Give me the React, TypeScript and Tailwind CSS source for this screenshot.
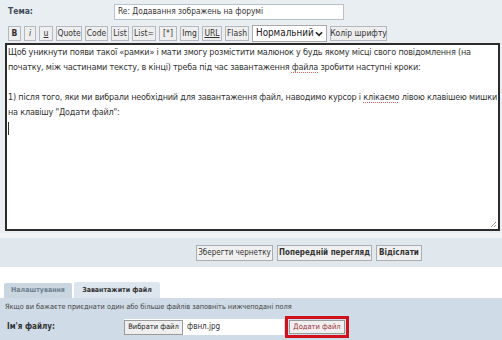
import type { ReactNode } from "react";

const FONT = "font-['DejaVu_Sans_Condensed','DejaVu_Sans',sans-serif]";

function ToolBtn({ children, className = "", w }: { children: ReactNode; className?: string; w: string }) {
  return (
    <span
      className={`flex h-[15px] items-center justify-center whitespace-nowrap border border-[#b4b9bf] bg-[#eeeeee] text-[8.5px] leading-none text-[#333] ${w} ${className}`}
    >
      {children}
    </span>
  );
}

function Misspelled({ children }: { children: ReactNode }) {
  return (
    <span className="underline decoration-[#e06666] decoration-dotted decoration-1 underline-offset-2">
      {children}
    </span>
  );
}

export default function App() {
  return (
    <main className={`h-[340px] w-[502px] overflow-hidden bg-white ${FONT}`}>
      <div className="bg-[#e9eef2] pb-[2px]">
        <div className="flex h-[23px] items-center pl-[8px]">
          <span className="w-[106px] text-[8.5px] font-bold text-[#3f4b5a]">Тема:</span>
          <div className="flex h-[16px] w-[230px] items-center whitespace-nowrap border border-[#b9c1c9] bg-white px-[3px] text-[8.3px] text-[#333]">
            Re: Додавання зображень на форумі
          </div>
        </div>
        <div className="mt-[2px] flex h-[17px] items-center gap-[3px] pl-[8px]">
          <ToolBtn w="w-[13px]" className="font-bold">B</ToolBtn>
          <ToolBtn w="w-[12px]" className="italic">i</ToolBtn>
          <ToolBtn w="w-[14px]" className="underline">u</ToolBtn>
          <ToolBtn w="w-[26px]">Quote</ToolBtn>
          <ToolBtn w="w-[23px]">Code</ToolBtn>
          <ToolBtn w="w-[18px]">List</ToolBtn>
          <ToolBtn w="w-[24px]">List=</ToolBtn>
          <ToolBtn w="w-[18px]">[*]</ToolBtn>
          <ToolBtn w="w-[19px]">Img</ToolBtn>
          <ToolBtn w="w-[20px]" className="underline">URL</ToolBtn>
          <ToolBtn w="w-[24px]">Flash</ToolBtn>
          <span className="flex h-[17px] w-[75px] items-center justify-between whitespace-nowrap border border-[#a9a9a9] bg-white pl-[3px] pr-[3px] text-[9.8px] text-[#222]">
            Нормальний
            <svg width="8" height="6" viewBox="0 0 9 6">
              <path d="M1 1 L4.5 4.5 L8 1" stroke="#222" strokeWidth="1.8" fill="none" />
            </svg>
          </span>
          <ToolBtn w="w-[57px]">Колір шрифту</ToolBtn>
        </div>
        <div className="relative ml-[5px] mt-[1px] h-[188px] w-[495px] whitespace-nowrap border-2 border-[#2b2b2b] bg-white px-[1px] text-[9px] leading-[15px] tracking-[-0.2px] text-[#333]">
          <p>
            Щоб уникнути появи такої «рамки» і мати змогу розмістити малюнок у будь якому місці свого повідомлення (на
            <br />
            початку, між частинами тексту, в кінці) треба під час завантаження <Misspelled>файла</Misspelled> зробити наступні кроки:
          </p>
          <p className="mt-[15px]">
            1) після того, яки ми вибрали необхідний для завантаження файл, наводимо курсор і <Misspelled>клікаємо</Misspelled> лівою клавішею мишки
            <br />
            на клавішу "Додати файл":
          </p>
          <div className="mt-[2px] h-[13px] w-px bg-[#333]" />
          <svg className="absolute bottom-[1px] right-[1px]" width="7" height="7" viewBox="0 0 7 7">
            <path d="M6 1 L1 6 M6 4 L4 6" stroke="#999" strokeWidth="1" />
          </svg>
        </div>
      </div>
      <div className="h-[5px] bg-[#f1f4f6]" />
      <div className="flex h-[29px] items-center bg-[#e0e7ed] pl-[196px]">
        <span className="flex h-[16px] w-[77px] items-center justify-center whitespace-nowrap border border-[#a8aeb4] bg-[#f0f0f0] text-[8px] text-[#333]">
          Зберегти чернетку
        </span>
        <span className="ml-[4px] flex h-[16px] w-[95px] items-center justify-center whitespace-nowrap border border-[#a8aeb4] bg-[#f0f0f0] text-[8px] font-bold text-[#333]">
          Попередній перегляд
        </span>
        <span className="ml-[4px] flex h-[16px] w-[46px] items-center justify-center whitespace-nowrap border border-[#a8aeb4] bg-[#f0f0f0] text-[8px] font-bold text-[#333]">
          Відіслати
        </span>
      </div>
      <div className="h-[15px] bg-white" />
      <div className="flex h-[16px] items-end gap-[2px] pl-[4px]">
        <span className="flex h-[15px] w-[68px] items-center justify-center whitespace-nowrap rounded-t-[2px] bg-[#c9d5df] text-[7px] font-bold text-[#6d7f8f]">
          Налаштування
        </span>
        <span className="flex h-[16px] w-[86px] items-center justify-center whitespace-nowrap rounded-t-[2px] bg-[#dde6ee] text-[7px] font-bold text-[#333]">
          Завантажити файл
        </span>
      </div>
      <div className="h-[50px] bg-[#cfdbe6] pl-[5px]">
        <div className="whitespace-nowrap pt-[2px] text-[7.3px] leading-[13px] text-[#444]">
          Якщо ви бажаєте приєднати один або більше файлів заповніть нижчеподані поля
        </div>
        <div className="mt-[3px] flex items-center">
          <span className="w-[119px] whitespace-nowrap pl-[2px] text-[8px] font-bold text-[#333]">Ім'я файлу:</span>
          <span className="flex h-[16px] w-[160px] items-center bg-white">
            <span className="flex h-[15px] w-[59px] items-center justify-center whitespace-nowrap border border-[#9a9a9a] bg-[#efefef] text-[7.5px] text-[#222]">
              Вибрати файл
            </span>
            <span className="ml-[4px] whitespace-nowrap text-[8px] text-[#333]">фвнл.jpg</span>
          </span>
          <span className="ml-[1px] flex h-[22px] w-[64px] items-center justify-center border-[3px] border-[#d0111b]">
            <span className="flex h-[14px] w-[56px] items-center justify-center whitespace-nowrap border border-[#999] bg-[#efefef] text-[7.5px] text-[#a0303a]">
              Додати файл
            </span>
          </span>
        </div>
      </div>
    </main>
  );
}
